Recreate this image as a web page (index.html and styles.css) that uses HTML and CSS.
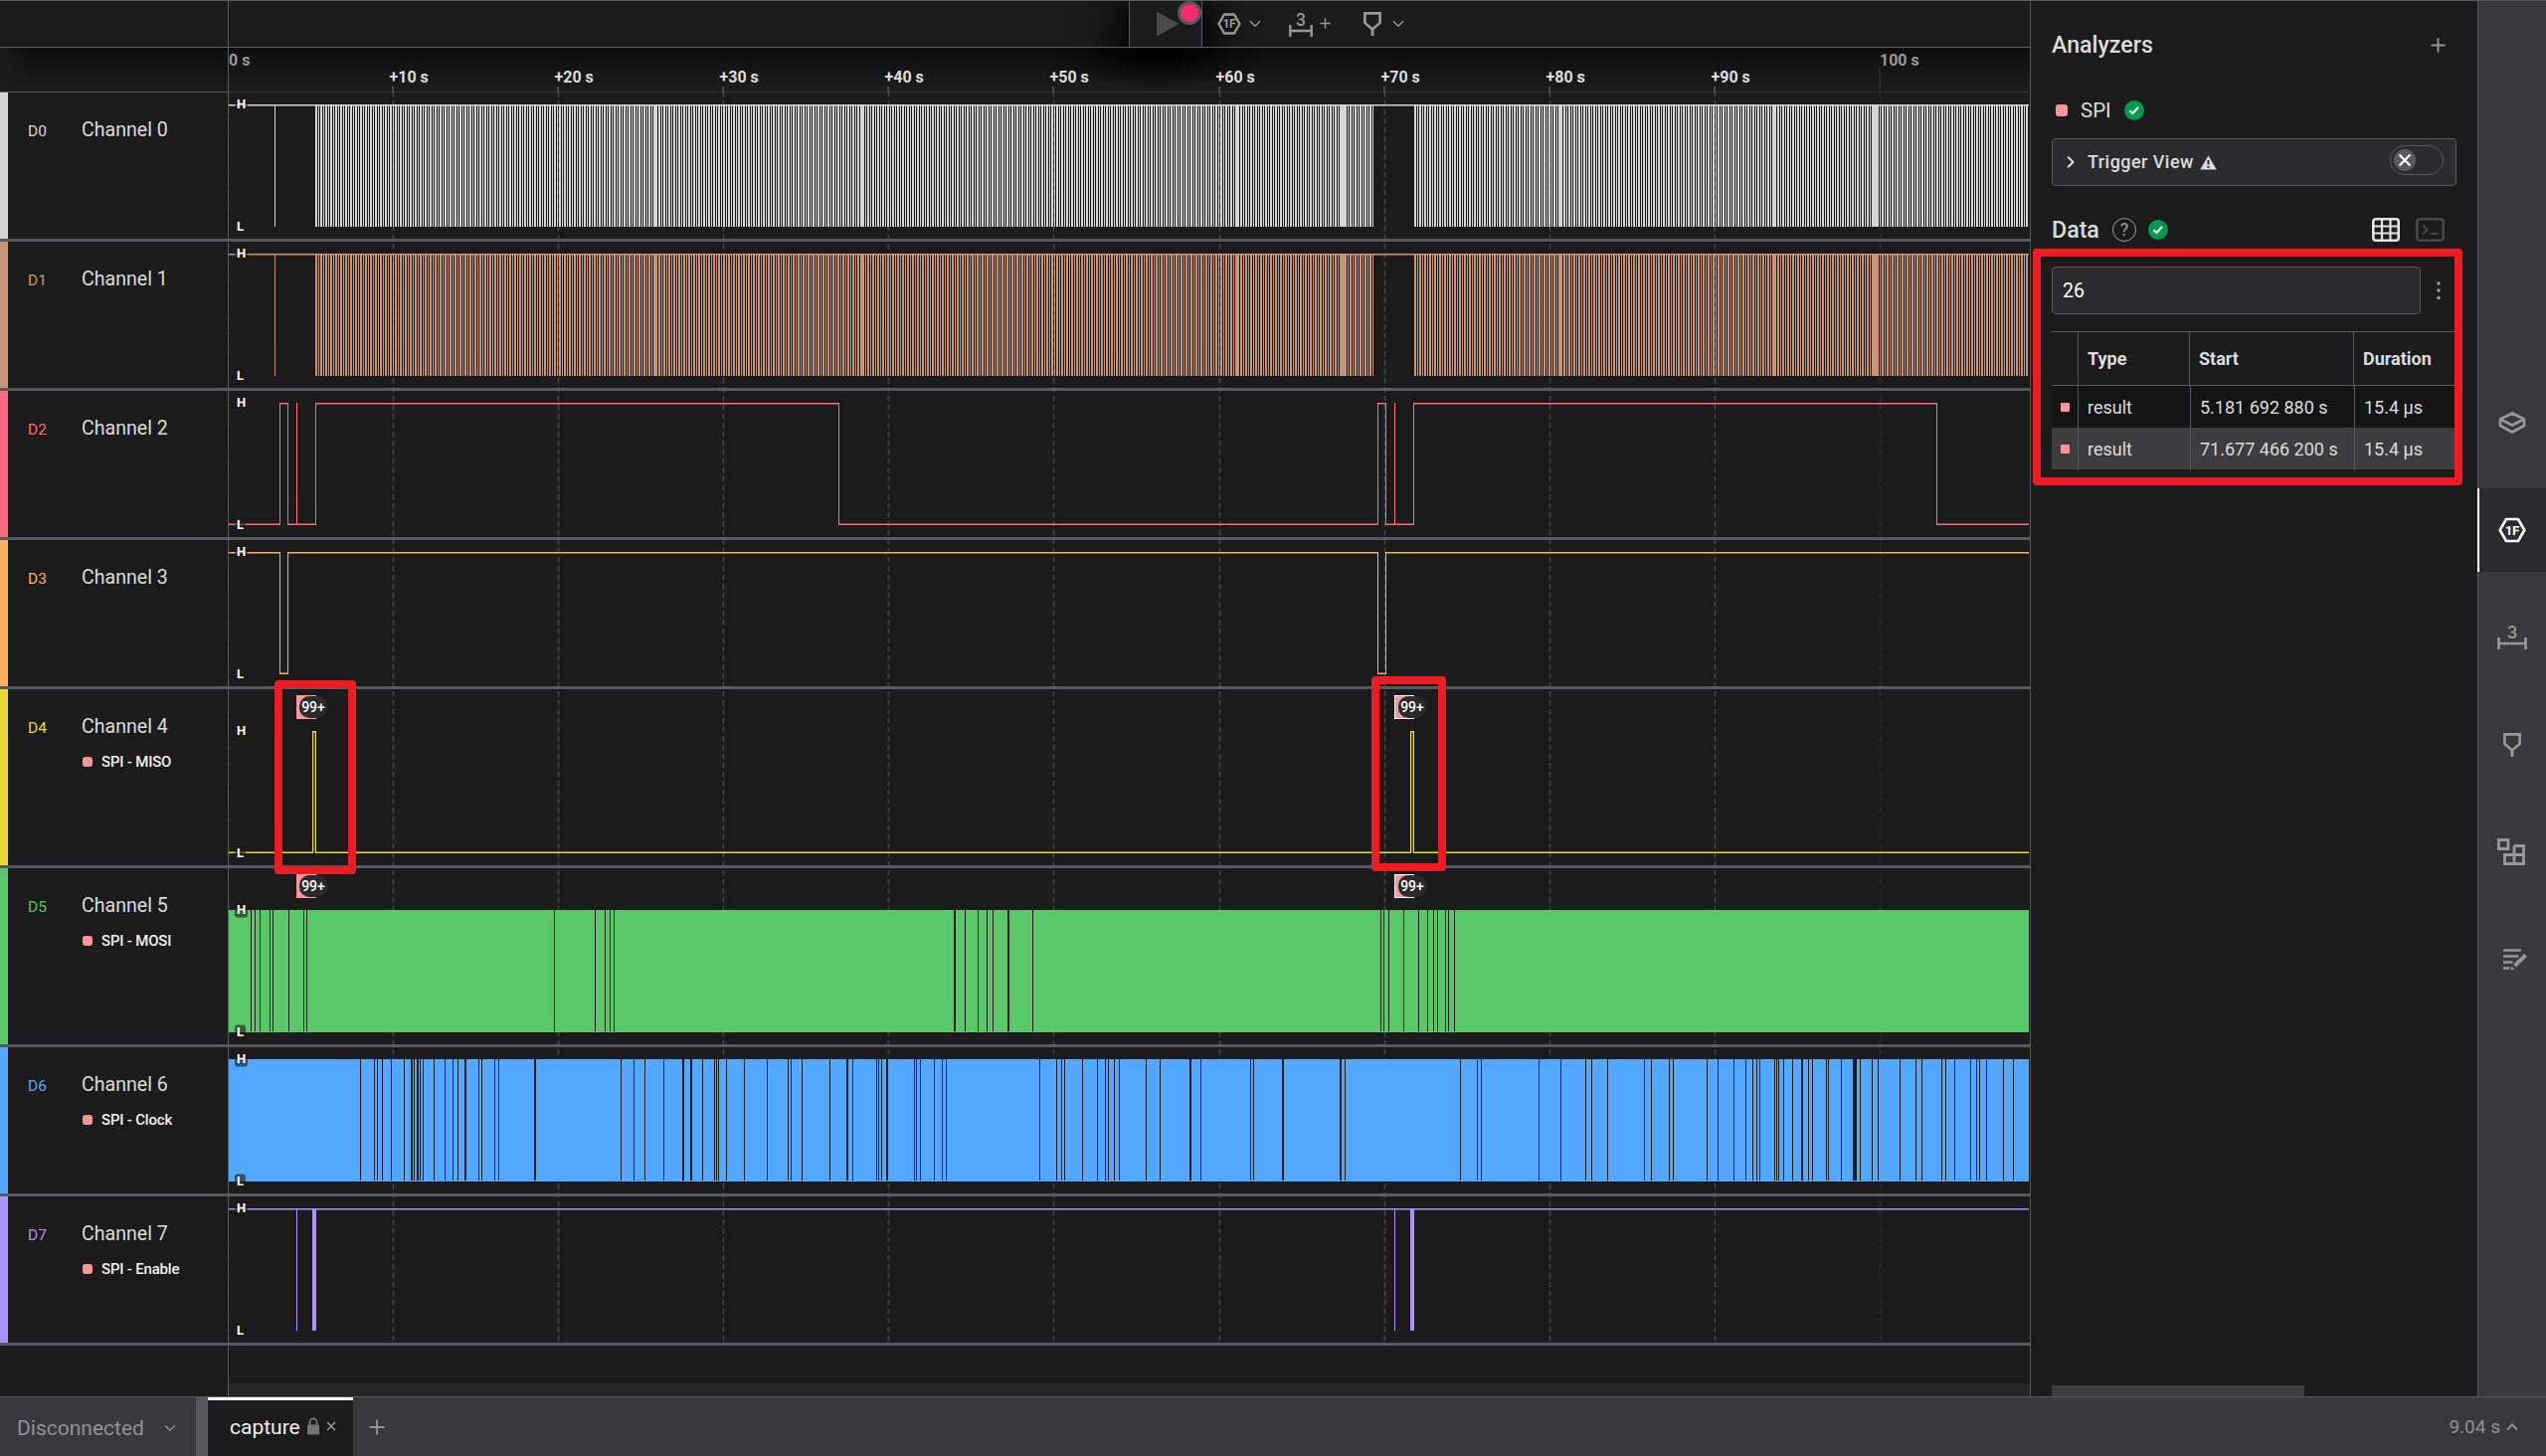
FILE: index.html
```html
<!DOCTYPE html>
<html lang="en">
<head>
<meta charset="utf-8">
<title>capture</title>
<link rel="stylesheet" href="styles.css">
</head>
<body>
<svg class="defs" width="0" height="0">
  <symbol id="marker" viewBox="0 0 18 24"><path d="M1.400 1.400h15.200v9.600L9 17.500 1.400 11z" fill="none" stroke="currentColor" stroke-width="2.700"/><path d="M9 16v8" stroke="currentColor" stroke-width="3"/></symbol>
  <symbol id="down" viewBox="0 0 12 8"><path d="M1 1.200l5 5 5-5" fill="none" stroke="currentColor" stroke-width="1.500"/></symbol>
  <symbol id="plus" viewBox="0 0 16 16"><path d="M8 0.500v15M.500 8h15" stroke="currentColor" stroke-width="2"/></symbol>
  <symbol id="ok" viewBox="0 0 20 20"><circle cx="10" cy="10" r="10" fill="#009b4d"/><path d="M5.500 10.200l3 2.800 5.500-6" fill="none" stroke="#fff" stroke-width="2.200"/></symbol>
</svg>

<div class="app">
  <div class="workspace">
    <main class="capture">
      <header class="toolbar">
        <div class="toolbar-side"></div>
        <div class="toolbar-main">
          <div class="run">
            <svg width="24" height="26" viewBox="0 0 24 26"><path d="M1 .500L23.500 13 1 25.500z" fill="#4a4a4a"/></svg>
            <i class="record"></i>
          </div>
          <div class="tools">
            <svg class="t-hex" viewBox="0 0 24 24"><path d="M7 2.500h10L22.500 12 17 21.500H7L1.500 12z" fill="none" stroke="currentColor" stroke-width="2.400" stroke-linejoin="round"/><text x="11.800" y="16.300" text-anchor="middle" font-size="12" font-weight="700" letter-spacing="-.5" fill="currentColor">1F</text></svg>
            <svg class="t-down"><use href="#down"/></svg>
            <svg class="t-measure" viewBox="0 0 24 26"><text x="12" y="13.500" text-anchor="middle" font-size="17.500" font-weight="500" fill="currentColor">3</text><path d="M1.300 13v12M22.700 13v12M1.300 19h21.400" fill="none" stroke="currentColor" stroke-width="2.400"/></svg>
            <svg class="t-plus"><use href="#plus"/></svg>
            <svg class="t-marker"><use href="#marker"/></svg><svg class="t-down"><use href="#down"/></svg>
          </div>
        </div>
      </header>
      <div class="ruler">
        <div class="ruler-side"></div>
        <svg class="ruler-scale" id="ruler" width="1811" height="45" viewBox="230 48 1811 45"></svg>
      </div>
      <div class="channels" id="channels">
        <svg class="grid" id="grid" width="1811" height="1260" viewBox="230 93 1811 1260"></svg>
      </div>
      <div class="rest"><div class="rest-side"></div><div class="rest-main"></div></div>
    </main>

    <aside class="panel">
      <div class="panel-head"><h2>Analyzers</h2><svg class="add"><use href="#plus"/></svg></div>
      <div class="analyzer"><i class="chip"></i><span>SPI</span><svg class="ok"><use href="#ok"/></svg></div>
      <div class="trigger">
        <svg width="8" height="14" viewBox="0 0 8 14"><path d="M1.200 1.800L6.500 7l-5.300 5.200" fill="none" stroke="#e0e0e0" stroke-width="2"/></svg>
        <span>Trigger View</span>
        <svg class="warn" width="17" height="15" viewBox="0 0 17 15"><path d="M8.500.500L16.700 14.500H.300z" fill="#dcdcdc"/><path d="M8.500 5v4.500M8.500 11v2" stroke="#2b2b2e" stroke-width="2"/></svg>
        <div class="toggle"><i><svg width="14" height="14" viewBox="0 0 14 14"><path d="M1.500 1.500l11 11M12.500 1.500l-11 11" stroke="#fff" stroke-width="2.200"/></svg></i></div>
      </div>
      <div class="data-head">
        <h2>Data</h2>
        <span class="help">?</span>
        <svg class="ok"><use href="#ok"/></svg>
        <svg class="table-icon" width="28" height="24" viewBox="0 0 28 24"><rect x="1.300" y="1.300" width="25.400" height="21.400" rx="2.500" fill="none" stroke="#e4e4e4" stroke-width="2.600"/><path d="M10 1v22M18.500 1v22M1 8.500h26M1 15.500h26" stroke="#e4e4e4" stroke-width="2.200"/></svg>
        <svg width="29" height="24" viewBox="0 0 29 24"><rect x="1.300" y="1.300" width="26.400" height="21.400" rx="3" fill="none" stroke="#48484b" stroke-width="2.600"/><path d="M7 7.500l4.500 4.500L7 16.500M14.500 16h7.500" fill="none" stroke="#48484b" stroke-width="2"/></svg>
      </div>
      <div class="search"><div class="field">26</div><svg width="6" height="20" viewBox="0 0 6 20" fill="#a0a0a0"><circle cx="3" cy="3" r="1.700"/><circle cx="3" cy="10" r="1.700"/><circle cx="3" cy="17.500" r="1.700"/></svg></div>
      <div class="table">
        <div class="tr th"><b></b><b>Type</b><b>Start</b><b>Duration</b></div>
        <div class="tr"><span><i></i></span><span>result</span><span>5.181 692 880 s</span><span>15.4 µs</span></div>
        <div class="tr on"><span><i></i></span><span>result</span><span>71.677 466 200 s</span><span>15.4 µs</span></div>
      </div>
      <div class="thumb"></div>
    </aside>

    <nav class="rail">
      <div class="rail-item"><svg class="device-icon" width="28" height="22" viewBox="0 0 28 22"><path d="M14 1.500L26 7.500v6.500L14 20.500 2 14V7.500z M2 7.500l12 6 12-6" fill="none" stroke="currentColor" stroke-width="2.600" stroke-linejoin="round"/></svg></div>
      <div class="rail-item active"><svg width="28" height="26" viewBox="0 0 28 26"><path d="M8 2h12L26.300 13 20 24H8L1.700 13z" fill="none" stroke="currentColor" stroke-width="2.600" stroke-linejoin="round"/><text x="13.800" y="17.800" text-anchor="middle" font-size="13.500" font-weight="700" letter-spacing="-.5" fill="currentColor">1F</text></svg></div>
      <div class="rail-item"><svg width="30" height="26" viewBox="0 0 30 26"><text x="15" y="13.500" text-anchor="middle" font-size="18" font-weight="500" fill="currentColor">3</text><path d="M1.500 13v12M28.500 13v12M1.500 19h27" fill="none" stroke="currentColor" stroke-width="2.600"/></svg></div>
      <div class="rail-item"><svg width="18" height="24"><use href="#marker"/></svg></div>
      <div class="rail-item"><svg class="blocks" width="28" height="27" viewBox="0 0 28 27"><path d="M1.500 1.500h9.500v9h-9.500zM17 7.500h9.500v18h-19v-9h19M17 7.500v18" fill="none" stroke="currentColor" stroke-width="2.800"/></svg></div>
      <div class="rail-item"><svg class="notes" width="24" height="22" viewBox="0 0 24 22"><path d="M0 1.500h18M0 7.500h15.500M0 13.500h9.500M0 19.500h6.500" stroke="currentColor" stroke-width="2.700"/><path d="M11.500 17L22.500 6.500" stroke="currentColor" stroke-width="4"/><path d="M7.500 21.500l1-4 3 3z" fill="currentColor"/></svg></div>
    </nav>
  </div>

  <footer class="bar">
    <div class="device"><span>Disconnected</span><svg width="12" height="8"><use href="#down"/></svg></div>
    <div class="tab"><span>capture</span>
      <svg width="12" height="18" viewBox="0 0 12 18"><path d="M2.500 8V4.800a3.500 3.500 0 0 1 7 0V8" fill="none" stroke="#74737c" stroke-width="1.800"/><rect y="7.500" width="12" height="10" rx="1" fill="#74737c"/></svg>
      <svg class="close" width="10" height="10" viewBox="0 0 10 10"><path d="M1 1l8 8M9 1L1 9" stroke="#999" stroke-width="1.500"/></svg>
    </div>
    <svg class="new-tab"><use href="#plus"/></svg>
    <div class="elapsed"><span>9.04 s</span><svg width="12" height="8" viewBox="0 0 12 8"><path d="M1 6.500l5-5 5 5" fill="none" stroke="currentColor" stroke-width="2"/></svg></div>
  </footer>
</div>

<div class="callout callout-a"></div>
<div class="callout callout-b"></div>
<div class="callout callout-c"></div>
<script src="script.js"></script>
</body>
</html>
```
FILE: styles.css
```css
* { box-sizing: border-box; }
body { margin: 0; background: #1b1b1b; color: #dcdcdc; font-family: Roboto, "Liberation Sans", sans-serif; overflow: hidden; }
svg { display: block; flex: none; }
.defs { position: absolute; }
.app { width: 2560px; height: 1464px; display: flex; flex-direction: column; }
.workspace { height: 1404px; display: flex; border-top: 1px solid #58595f; }

.capture { width: 2041px; display: flex; flex-direction: column; }
.toolbar { height: 47px; display: flex; border-bottom: 1px solid #5c5c5e; }
.toolbar-side { width: 230px; border-right: 1px solid #58595f; }
.toolbar-main { flex: 1; display: flex; padding-left: 905px; overflow: hidden; }
.run { position: relative; width: 74px; border: solid #58595f; border-width: 0 1px; background: #1b1b1b; padding: 10px 0 0 26px; box-shadow: 0 10px 40px 12px #000; }
.record { position: absolute; left: 48px; top: 0; width: 24px; height: 24px; border-radius: 50%; background: #fa2a6b; border: 3px solid #56585e; }
.tools { display: flex; color: #999; padding-left: 15px; z-index: 1; }
.t-hex { width: 24px; height: 24px; margin-top: 11px; }
.t-down { width: 12px; height: 8px; margin: 19px 0 0 8px; }
.t-measure { width: 24px; height: 26px; margin: 11px 0 0 28px; }
.t-plus { width: 11px; height: 11px; margin: 17px 0 0 7px; }
.t-marker { width: 18px; height: 24px; margin: 11px 0 0 33px; }
.t-marker + .t-down { margin-left: 11px; }

.ruler { height: 45px; display: flex; background: radial-gradient(ellipse 110px 40px at 1165px 2px, #000 10%, transparent 100%), linear-gradient(#0d0d0d, #141414 45%, #1b1b1b 85%); }
.ruler-side { width: 230px; border-right: 1px solid #58595f; border-bottom: 1px solid #58595f; background: linear-gradient(90deg, #1b1b1b, transparent 30px); }
.ruler-scale text { font-size: 16px; font-weight: 700; fill: #dedede; }
.ruler-scale text.major { fill: #999; }

.channels { position: relative; display: flex; flex-direction: column; }
.grid { position: absolute; left: 230px; top: 0; }
.row { height: 150px; display: flex; border-bottom: 3px solid #595a60; position: relative; }
.row.tall { height: 180px; }
.row-label { width: 230px; display: flex; border-left: 8px solid var(--c); border-right: 1px solid #58595f; padding-left: 20px; }
.row-id { width: 54px; font-size: 15.500px; line-height: 24px; padding-top: 27px; color: var(--c); }
.row-name { font-size: 19.600px; line-height: 24px; padding-top: 26px; }
.row-tag { display: flex; align-items: center; gap: 9px; margin-top: 13px; padding-left: 1px; color: #f0f0f0; font-size: 15px; line-height: 20px; font-weight: 500; letter-spacing: -.2px; }
.row-tag i { width: 10px; height: 10px; border-radius: 3px; background: #f79797; }
.wave text { font-size: 13px; font-weight: 700; fill: #fff; }
.wave text.count { font-size: 14px; font-weight: 500; }
.rest { flex: 1; display: flex; }
.rest-side { width: 230px; border-right: 1px solid #58595f; }
.rest-main { flex: 1; margin-top: 38px; background: #252525; }

.panel { width: 450px; border-left: 1px solid #58595f; padding: 29px 0 0 21px; display: flex; flex-direction: column; }
.panel h2 { margin: 0; font-size: 23.200px; font-weight: 500; line-height: 29px; }
.panel-head { height: 30px; display: flex; justify-content: space-between; align-items: center; padding-right: 32px; }
.add { width: 15px; height: 15px; color: #999; }
.analyzer { height: 30px; margin-top: 36px; padding-left: 4px; display: flex; align-items: center; font-size: 20.500px; }
.chip { width: 12px; height: 12px; border-radius: 3px; background: #f79797; margin-right: 13px; }
.ok { width: 20px; height: 20px; margin-left: 13px; }
.trigger { width: 407px; height: 48px; margin-top: 13px; border: 1px solid #58595f; border-radius: 4px; background: #2b2b2d; display: flex; align-items: center; padding: 0 12px 0 14px; font-size: 18px; font-weight: 500; letter-spacing: .45px; }
.trigger span { margin: -1px 6px 0 13px; }
.toggle { width: 54px; height: 30px; margin: -4px 0 0 auto; border: 1px solid #58595f; border-radius: 15px; padding: 3px; }
.toggle i { width: 22px; height: 22px; border-radius: 50%; background: #5a5a5c; display: flex; align-items: center; justify-content: center; }
.data-head { height: 30px; margin-top: 29px; display: flex; align-items: center; }
.data-head h2 { width: 61px; }
.help { width: 24px; height: 24px; border: 1.500px solid #a0a0a0; border-radius: 50%; text-align: center; font-size: 18px; line-height: 21px; color: #a0a0a0; }
.data-head .ok { margin-left: 12px; }
.table-icon { margin: 0 16px 0 205px; }
.search { margin-top: 22px; height: 48px; display: flex; align-items: center; gap: 15px; }
.field { width: 371px; height: 48px; background: #2b2b2d; border: 1px solid #58595f; border-radius: 4px; padding-left: 10px; font-size: 19.500px; line-height: 47px; color: #fff; }
.table { width: 407px; margin-top: 17px; font-size: 18px; }
.tr { height: 42px; display: grid; grid-template-columns: 27px 113px 165px 1fr; background: #141414; }
.tr.on { background: #3d3d3f; }
.tr > * { border-right: 1px solid #58595f; padding-left: 9px; line-height: 43px; }
.tr > :last-child { border-right: 0; }
.tr i { display: block; width: 9px; height: 9px; margin-top: 17px; background: #f79797; border-radius: 1px; }
.th { height: 55px; grid-template-columns: 27px 112px 165px 1fr; background: none; border: solid #58595f; border-width: 1px 0; font-size: 18px; }
.th > * { line-height: 54px; }
.thumb { width: 254px; height: 11px; margin-top: auto; background: #3d3d3d; }

.rail { width: 69px; background: #39383d; border-left: 1px solid #58595f; padding-top: 382px; display: flex; flex-direction: column; gap: 24px; color: #999; }
.rail-item { height: 84px; display: flex; align-items: center; justify-content: center; }
.rail-item.active { margin-left: -1px; padding-right: 2px; background: #2b2b2d; border-left: 2px solid #fff; color: #fff; }
.device-icon { margin-top: -1px; }
.blocks { margin: -2px 2px 0 0; }
.notes { margin-left: 6px; }

.bar { height: 60px; background: #39383d; border-top: 1px solid #58595f; display: flex; align-items: center; color: #929294; }
.device { width: 209px; height: 59px; border-right: 12px solid #58595f; display: flex; align-items: center; padding: 2px 0 0 17px; font-size: 21px; gap: 20px; }
.tab { width: 146px; height: 59px; background: #1b1b1b; border-top: 3px solid #fff; display: flex; align-items: center; padding-left: 22px; color: #eee; font-size: 21px; gap: 7px; }
.tab span { line-height: 24px; margin-top: -2px; }
.tab svg { margin-top: -4px; }
.new-tab { width: 16px; height: 16px; margin-left: 16px; }
.elapsed { margin-left: auto; padding: 0 28px 0 0; display: flex; align-items: center; gap: 6px; font-size: 19px; }

.callout { position: absolute; border: 8px solid #ed1c24; border-radius: 4px; }
.callout-a { left: 276px; top: 684px; width: 82px; height: 195px; }
.callout-b { left: 1379px; top: 680px; width: 75px; height: 196px; }
.callout-c { left: 2044px; top: 250px; width: 432px; height: 238px; }
```
FILE: script.js
```js
const LEFT = 230, RIGHT = 2040;
const tick = n => 229.4 + 166.1 * n;

// Ruler labels and ticks
let ruler = `<path d="M230 92.500H2040" stroke="#333336"/>`;
let grid = '';
for (let n = 0; n <= 10; n++) {
  const major = n % 10 === 0;
  const x = Math.floor(tick(n));
  const label = major ? `${n * 10} s` : `+${n * 10} s`;
  ruler += `<text x="${major ? x + (n ? 0 : 1) : x - 3.500}" y="${major ? 65.500 : 82.500}"${major ? ' class="major"' : ''}>${label}</text>`;
  if (n) ruler += `<path d="M${x} ${major ? 69 : 87}V93" stroke="${major ? '#29292b' : '#48484a'}" stroke-width="2"/>`;
  grid += `<path d="M${x + .500} 93V1353" stroke="${n === 10 ? '#2b2b2e' : '#454549'}" stroke-width="1.500" stroke-dasharray="5.500 3.500" stroke-dashoffset="1"/>`;
}
document.getElementById('ruler').innerHTML = ruler;
document.getElementById('grid').innerHTML = grid;

// Idle gaps: [x, width] or x for a one pixel gap
const mosiGaps = [252, 256, 261, 271, 274, 290, 305, 308, 557, 598, 608, 613, 617, [959, 2], 970, 983, 992, 998, [1013, 2],
  1038, 1388, 1391, 1396, 1411, 1426, 1435, 1441, 1445, 1453, 1456, 1462];
const clockGaps = [362, 376, 379, 384, 393, 406, [413, 2], 416, [419, 2], 422, 425, 436, 447, 455, 460, [467, 2], 481, 484,
  497, 501, [537, 2], 624, 637, 648, 667, [686, 2], [694, 2], 706, 718, 720, 722, 730, 748, 771, 792, 795, 806, 834, [851, 2], 857,
  881, 883, 886, [891, 2], 919, 921, 925, 939, 947, 951, 1045, 1062, 1067, 1070, 1088, 1103, 1111, 1114, 1120, 1125, 1152,
  1166, [1196, 2], 1207, 1257, 1260, [1289, 2], [1347, 2], 1352, 1468, 1485, 1489, 1547, 1569, 1594, 1600, 1616, 1653, 1660,
  1678, 1682, 1716, 1727, 1743, 1755, 1762, 1766, 1769, 1784, 1786, 1788, 1793, 1802, [1811, 2], 1818, 1822, 1836, 1838,
  1851, [1863, 4], 1870, 1882, 1888, 1910, 1926, 1932, [1952, 1], 1956, 1965, 1981, 1987, 1990, 1997, 2014, 2024];

// Toggle points of the slow signals
const edges2 = [281, 289, 298, 298, 317, 843, 1385, 1393, 1402, 1402, 1421, 1947];
const edges3 = [281, 289, 1385, 1393];
const edges4 = [314, 317, 1418, 1421];

const rect = (x, y, w, h, c, o = 1) => `<rect x="${x}" y="${y}" width="${w}" height="${h}" fill="${c}" opacity="${o}"/>`;

function square(edges, level, top, c) {
  let out = '', x = LEFT;
  for (const e of [...edges, RIGHT]) {
    const w = e - x + (e === RIGHT ? 0 : 1);
    out += level ? rect(x, top, w, 1, c) + rect(x, top + 1, w, 1, c, .5)
                 : rect(x, top + 121, w, 1, c, .5) + rect(x, top + 122, w, 1, c);
    if (e !== RIGHT) out += rect(e, top, 1, 123, c);
    if (level && w === 4) out += rect(x + 1, top, 2, 122, c, .3);
    x = e;
    level = !level;
  }
  return out;
}

function burst(top, c) {
  const wide = [657, 866, 1242, 1349, 1567, 1782, 1884];
  let out = rect(LEFT, top, RIGHT - LEFT, 1, c) + rect(LEFT, top + 1, RIGHT - LEFT, 1, c, .5) + rect(276, top, 1, 123, c);
  for (const [a, b] of [[317, 1381], [1422, RIGHT]]) {
    for (let x = a; x < b; x += 5) {
      out += rect(x, top, 2, 123, c);
      if (x + 3 < b) out += rect(x + 3, top, 1, 123, c);
    }
  }
  return out + wide.map(x => rect(x, top, 3, 123, c)).join('');
}

function solid(gaps, top, c) {
  return rect(LEFT, top, RIGHT - LEFT, 123, c) + gaps.map(g => {
    const [x, w] = Array.isArray(g) ? g : [g, 1];
    return rect(x, top, w, 122, '#1b1b1b');
  }).join('');
}

function enable(top, c) {
  return square([], true, top, c) + [[298, 1], [314, 4], [1402, 1], [1418, 4]].map(([x, w]) => rect(x, top, w, 123, c)).join('');
}

function badge(x, selected) {
  const pill = x + (selected ? 4 : 3);
  return rect(x, 6, 20, 24, selected ? '#fff' : '#f79797')
    + (selected ? rect(x + 1, 7, 19, 22, '#f79797') : '')
    + `<rect x="${pill}" y="7" width="28" height="22" rx="10" fill="#2b2b2d"/>`
    + `<text class="count" x="${pill + 14}" y="23" text-anchor="middle">99+</text>`;
}

const level = (t, y) => `<rect x="236" y="${y - 7}" width="${t === 'H' ? 13 : 11}" height="15" rx="3" fill="#1b1b1b" opacity=".62"/><text x="238" y="${y + 4}">${t}</text>`;

const rows = [
  { c: '#d6d6d6', draw: burst },
  { c: '#c99579', draw: burst },
  { c: '#ff6a80', draw: (t, c) => square(edges2, false, t, c) },
  { c: '#ffb05a', draw: (t, c) => square(edges3, true, t, c) },
  { c: '#e8d935', tag: 'MISO', badges: true, draw: (t, c) => square(edges4, false, t, c) },
  { c: '#59c868', tag: 'MOSI', badges: true, draw: (t, c) => solid(mosiGaps, t, c) },
  { c: '#52a8ff', tag: 'Clock', draw: (t, c) => solid(clockGaps, t, c) },
  { c: '#ac90fc', tag: 'Enable', draw: enable }
];

const channels = document.getElementById('channels');
rows.forEach((r, i) => {
  const top = r.badges ? 42 : 12, h = r.badges ? 177 : 147;
  channels.insertAdjacentHTML('beforeend', `
    <section class="row${r.badges ? ' tall' : ''}" style="--c:${r.c}">
      <div class="row-label">
        <div class="row-id">D${i}</div>
        <div><div class="row-name">Channel ${i}</div>${r.tag ? `<div class="row-tag"><i></i>SPI - ${r.tag}</div>` : ''}</div>
      </div>
      <svg class="wave" width="1811" height="${h}" viewBox="230 0 1811 ${h}">
        ${r.draw(top, r.c)}${level('H', top - .500)}${level('L', top + 122.500)}${r.badges ? badge(298) + badge(1402, true) : ''}
      </svg>
    </section>`);
});
```
